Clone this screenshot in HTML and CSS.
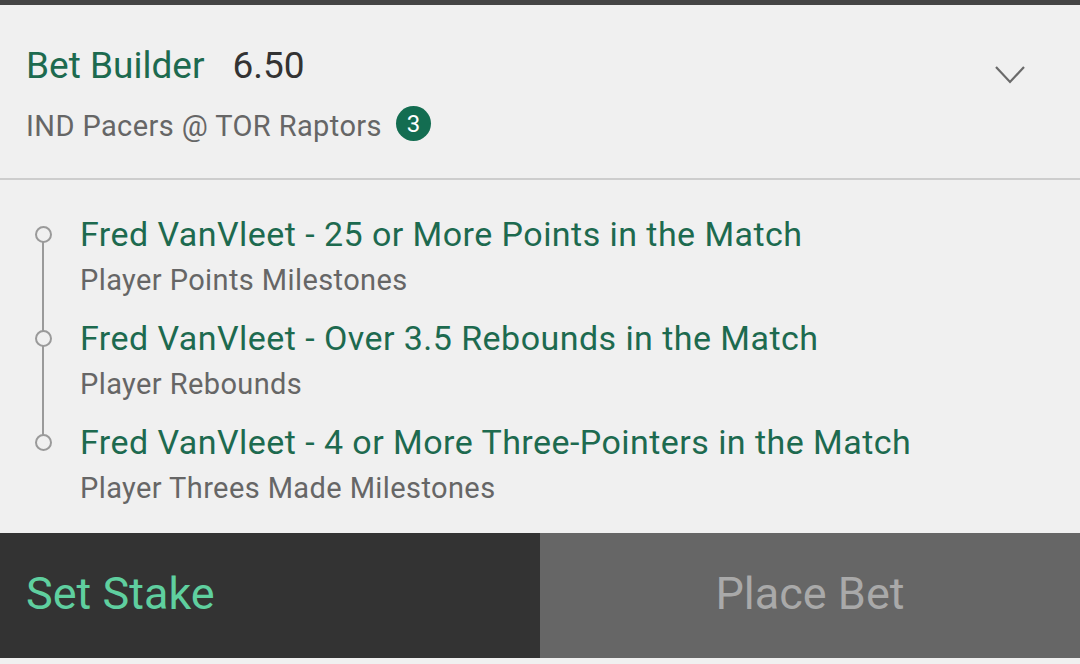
FILE: index.html
```html
<!DOCTYPE html>
<html>
<head>
<meta charset="utf-8">
<link rel="stylesheet" href="styles.css">
</head>
<body>
<div class="page">
  <div class="topbar"></div>
  <div class="header">
    <div class="header-text">
      <div class="title-row"><span class="title">Bet Builder</span><span class="odds">6.50</span></div>
      <div class="match-row"><span class="match">IND Pacers @ TOR Raptors</span><span class="badge">3</span></div>
    </div>
    <svg class="chevron" width="32" height="20" viewBox="0 0 32 20"><polyline points="2,2 16,17 30,2" fill="none" stroke="#6a6a6a" stroke-width="2.2"/></svg>
  </div>
  <div class="legs">
    <div class="leg has-line">
      <div class="marker"><span class="dot"></span></div>
      <div class="leg-body">
        <div class="leg-title">Fred VanVleet - 25 or More Points in the Match</div>
        <div class="leg-sub">Player Points Milestones</div>
      </div>
    </div>
    <div class="leg has-line">
      <div class="marker"><span class="dot"></span></div>
      <div class="leg-body">
        <div class="leg-title">Fred VanVleet - Over 3.5 Rebounds in the Match</div>
        <div class="leg-sub">Player Rebounds</div>
      </div>
    </div>
    <div class="leg">
      <div class="marker"><span class="dot"></span></div>
      <div class="leg-body">
        <div class="leg-title">Fred VanVleet - 4 or More Three-Pointers in the Match</div>
        <div class="leg-sub">Player Threes Made Milestones</div>
      </div>
    </div>
  </div>
  <div class="actions">
    <div class="btn btn-stake"><span class="btn-label">Set Stake</span></div>
    <div class="btn btn-place"><span class="btn-label">Place Bet</span></div>
  </div>
</div>
</body>
</html>
```
FILE: styles.css
```css
* { box-sizing: border-box; }
html, body {
  margin: 0;
  padding: 0;
  background: #f0f0f0;
}
body {
  font-family: Roboto, "Liberation Sans", sans-serif;
  width: 1080px;
  height: 664px;
  overflow: hidden;
}
.page {
  display: flex;
  flex-direction: column;
  height: 664px;
}
.topbar {
  height: 5px;
  background: #454545;
}
.header {
  height: 175px;
  border-bottom: 2px solid #cdcdcd;
  display: flex;
  justify-content: space-between;
  align-items: flex-start;
  padding: 39px 54px 0 26px;
}
.header-text {
  display: flex;
  flex-direction: column;
  gap: 18px;
}
.title-row {
  display: flex;
  align-items: center;
  height: 44px;
  line-height: 44px;
}
.title {
  font-size: 37px;
  color: #1d6a4f;
}
.odds {
  font-size: 37px;
  color: #333333;
  margin-left: 28px;
}
.match-row {
  display: flex;
  align-items: center;
  height: 40px;
}
.match {
  font-size: 29px;
  letter-spacing: 0.4px;
  color: #666666;
  line-height: 40px;
}
.badge {
  margin-left: 14px;
  width: 35px;
  height: 35px;
  border-radius: 50%;
  background: #136d51;
  color: #ffffff;
  font-size: 24px;
  display: flex;
  align-items: center;
  justify-content: center;
  line-height: 1;
  margin-top: -5px;
}
.chevron {
  margin-top: 21px;
}
.legs {
  display: flex;
  flex-direction: column;
  gap: 12px;
  padding: 31px 0 22px 0;
}
.leg {
  display: grid;
  grid-template-columns: 80px 1fr;
  position: relative;
}
.marker {
  height: 46px;
  display: flex;
  align-items: center;
  padding-left: 35px;
}
.dot {
  width: 17px;
  height: 17px;
  border: 2px solid #9a9a9a;
  border-radius: 50%;
  background: #f0f0f0;
  position: relative;
  z-index: 2;
}
.has-line::after {
  content: "";
  position: absolute;
  left: 42px;
  top: 23px;
  width: 2px;
  height: 104px;
  background: #9a9a9a;
  z-index: 1;
}
.leg-title {
  font-size: 34px;
  letter-spacing: 0.45px;
  line-height: 46px;
  color: #1d6a4f;
}
.leg-sub {
  font-size: 29px;
  letter-spacing: 0.4px;
  line-height: 46px;
  color: #666666;
}
.actions {
  display: flex;
  height: 125px;
}
.btn {
  width: 540px;
  display: flex;
  align-items: center;
}
.btn-stake {
  background: #333333;
  padding-left: 26px;
}
.btn-place {
  background: #666666;
  justify-content: center;
}
.btn-label {
  font-size: 45px;
  line-height: 1;
  margin-top: -4px;
}
.btn-stake .btn-label {
  color: #5fcf9f;
}
.btn-place .btn-label {
  color: #a9a9a9;
}
```
